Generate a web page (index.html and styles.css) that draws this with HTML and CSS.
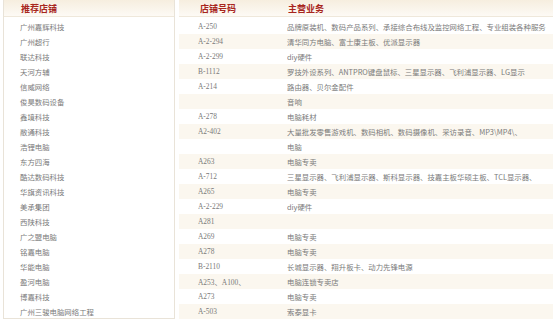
FILE: index.html
```html
<!DOCTYPE html>
<html lang="zh">
<head>
<meta charset="utf-8">
<title>推荐店铺</title>
<link rel="stylesheet" href="styles.css">
</head>
<body>
<div class="page">
  <aside class="shops">
    <div class="head"><span class="head-title">推荐店铺</span></div>
    <ul class="shop-list">
      <li>广州嘉辉科技</li>
      <li>广州超行</li>
      <li>联达科技</li>
      <li>天河方辅</li>
      <li>信威网络</li>
      <li>俊昊数码设备</li>
      <li>鑫境科技</li>
      <li>敝通科技</li>
      <li>浩锂电脑</li>
      <li>东方四海</li>
      <li>酷达数码科技</li>
      <li>华旗资讯科技</li>
      <li>美承集团</li>
      <li>西陕科技</li>
      <li>广之盟电脑</li>
      <li>铭嘉电脑</li>
      <li>华能电脑</li>
      <li>盈河电脑</li>
      <li>博嘉科技</li>
      <li>广州三骏电脑网络工程</li>
    </ul>
  </aside>
  <section class="table">
    <div class="row head">
      <span class="c1 head-title">店铺号码</span>
      <span class="c2 head-title">主营业务</span>
    </div>
    <div class="rows">
      <div class="row"><span class="c1">A-250</span><span class="c2">品牌原装机、数码产品系列、承接综合布线及监控网络工程、专业组装各种服务</span></div>
      <div class="row"><span class="c1">A-2-294</span><span class="c2">清华同方电脑、富士康主板、优派显示器</span></div>
      <div class="row"><span class="c1">A-2-299</span><span class="c2">diy硬件</span></div>
      <div class="row"><span class="c1">B-1112</span><span class="c2">罗技外设系列、ANTPRO键盘鼠标、三星显示器、飞利浦显示器、LG显示</span></div>
      <div class="row"><span class="c1">A-214</span><span class="c2">路由器、贝尔金配件</span></div>
      <div class="row"><span class="c1"></span><span class="c2">音响</span></div>
      <div class="row"><span class="c1">A-278</span><span class="c2">电脑耗材</span></div>
      <div class="row"><span class="c1">A2-402</span><span class="c2">大量批发零售游戏机、数码相机、数码摄像机、采访录音、MP3\MP4\、</span></div>
      <div class="row"><span class="c1"></span><span class="c2">电脑</span></div>
      <div class="row"><span class="c1">A263</span><span class="c2">电脑专卖</span></div>
      <div class="row"><span class="c1">A-712</span><span class="c2">三星显示器、飞利浦显示器、斯科显示器、技嘉主板华硕主板、TCL显示器、</span></div>
      <div class="row"><span class="c1">A265</span><span class="c2">电脑专卖</span></div>
      <div class="row"><span class="c1">A-2-229</span><span class="c2">diy硬件</span></div>
      <div class="row"><span class="c1">A281</span><span class="c2"></span></div>
      <div class="row"><span class="c1">A269</span><span class="c2">电脑专卖</span></div>
      <div class="row"><span class="c1">A278</span><span class="c2">电脑专卖</span></div>
      <div class="row"><span class="c1">B-2110</span><span class="c2">长城显示器、翔升板卡、动力先锋电源</span></div>
      <div class="row"><span class="c1">A253、A100、</span><span class="c2">电脑连锁专卖店</span></div>
      <div class="row"><span class="c1">A273</span><span class="c2">电脑专卖</span></div>
      <div class="row"><span class="c1">A-503</span><span class="c2">索泰显卡</span></div>
    </div>
  </section>
</div>
</body>
</html>
```

FILE: styles.css
```css
html, body {
  margin: 0;
  padding: 0;
  background: #ffffff;
  overflow: hidden;
}
body {
  font-family: "Liberation Serif", "Noto Sans CJK SC", serif;
  font-size: 7.4px;
  color: #7a7a7a;
}
.page {
  display: flex;
  align-items: flex-start;
  gap: 4px;
  padding-left: 3px;
  height: 323px;
}
.shops {
  width: 172px;
  height: 319px;
  box-sizing: border-box;
  border: 1px solid #e9e3d8;
  border-top: none;
  flex: none;
  overflow: hidden;
}
.head {
  height: 17px;
  box-sizing: border-box;
  border-bottom: 1px solid #efe8db;
  background: linear-gradient(#f6eedf, #fdfaf5);
  display: flex;
  align-items: center;
}
.head-title {
  font-family: "Noto Sans CJK SC", sans-serif;
  font-weight: bold;
  font-size: 9px;
  color: #a8261d;
}
.shops .head {
  padding-left: 17px;
}
.shop-list {
  list-style: none;
  margin: 2px 0 0 0;
  padding: 0 0 0 16px;
}
.shop-list li {
  height: 15px;
  line-height: 15px;
  font-family: "Noto Sans CJK SC", sans-serif;
  white-space: nowrap;
}
.table {
  flex: 1;
  min-width: 0;
  overflow: hidden;
}
.row {
  display: grid;
  grid-template-columns: 89px 1fr;
  padding-left: 19px;
  height: 15px;
  align-items: center;
  white-space: nowrap;
}
.table .row.head {
  height: 17px;
  padding-left: 21px;
  grid-template-columns: 88px 1fr;
}
.rows {
  padding-top: 2px;
}
.rows .row:nth-child(even) {
  background: #fbf7ef;
}
.c1, .c2 {
  overflow: hidden;
}
.c2 {
  font-family: "Noto Sans CJK SC", sans-serif;
}
```
